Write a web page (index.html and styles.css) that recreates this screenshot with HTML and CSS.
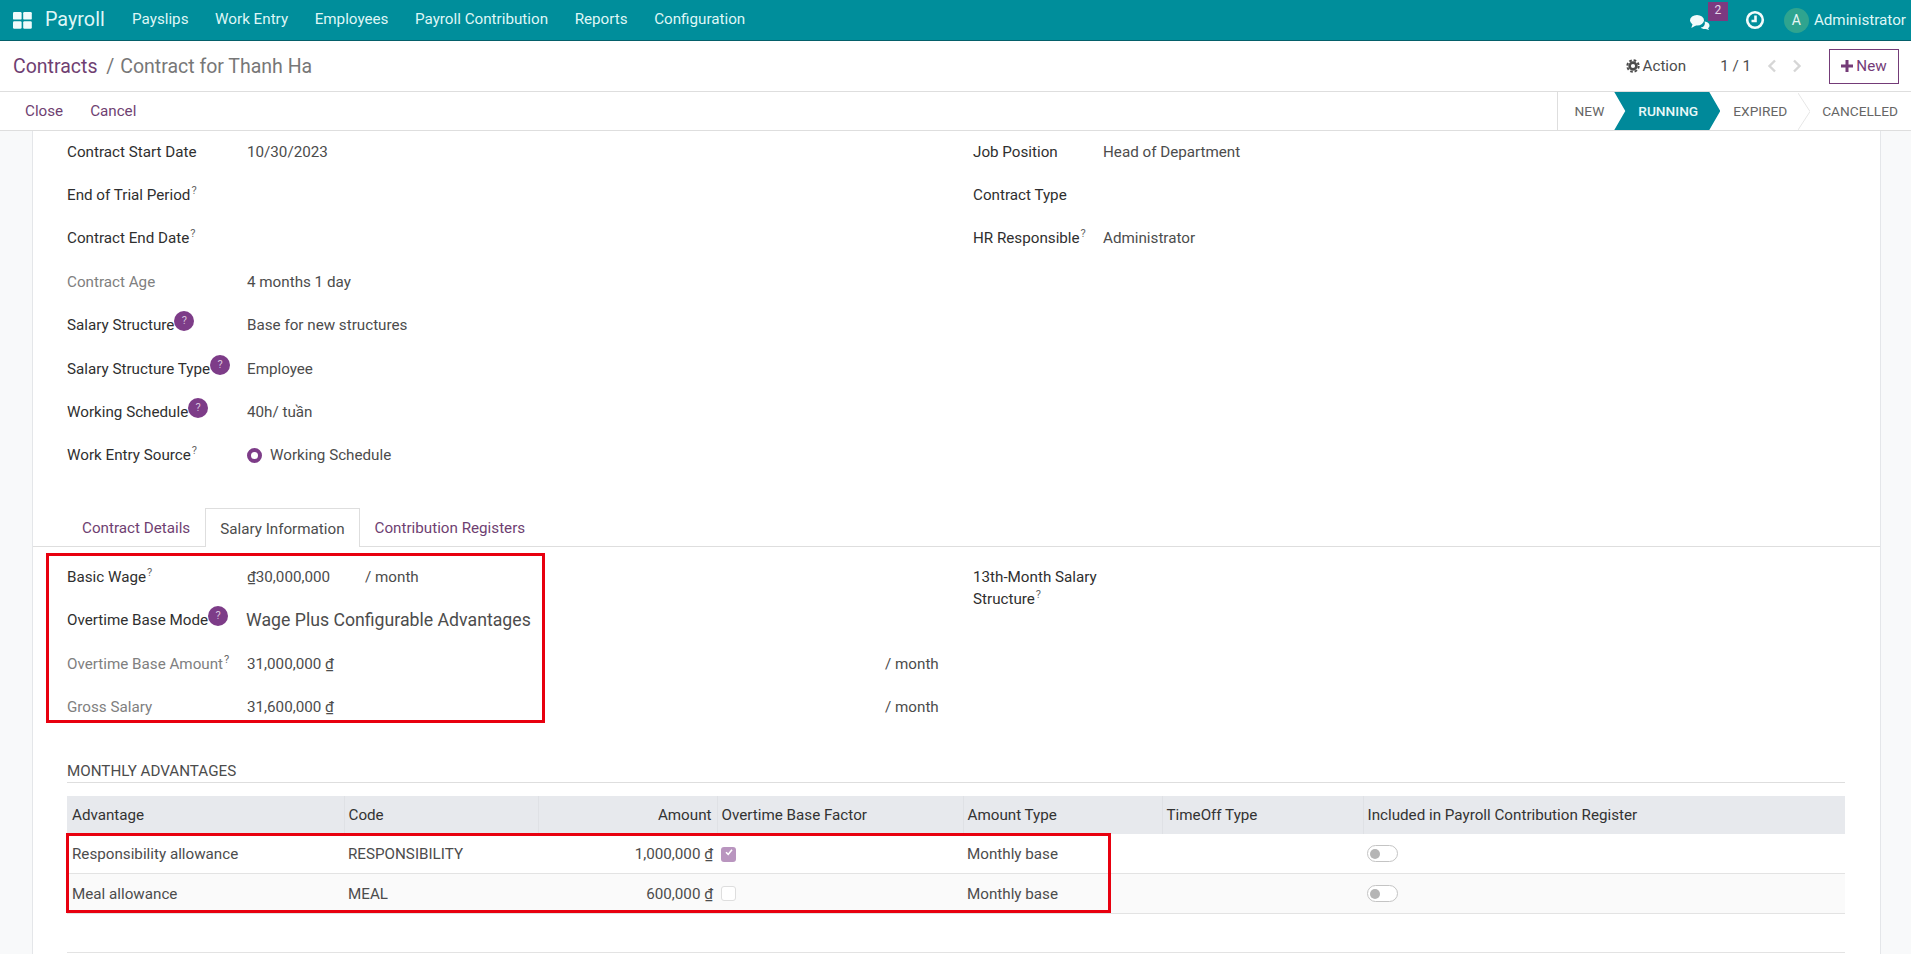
FILE: index.html
```html
<!DOCTYPE html>
<html lang="en">
  <head>
    <meta charset="UTF-8" />
    <title>Contract for Thanh Ha - Payroll</title>
    <link rel="stylesheet" href="styles.css">
  </head>
  <body>
    <nav class="navbar">
      <svg class="apps-icon" viewBox="0 0 19 17" width="19" height="17">
        <rect x="0" y="0" width="8.6" height="7.6" rx="1.2" />
        <rect x="10.2" y="0" width="8.6" height="7.6" rx="1.2" />
        <rect x="0" y="9.2" width="8.6" height="7.6" rx="1.2" />
        <rect x="10.2" y="9.2" width="8.6" height="7.6" rx="1.2" />
      </svg>
      <a class="brand">Payroll</a>
      <a class="nav-link">Payslips</a>
      <a class="nav-link">Work Entry</a>
      <a class="nav-link">Employees</a>
      <a class="nav-link">Payroll Contribution</a>
      <a class="nav-link">Reports</a>
      <a class="nav-link">Configuration</a>

      <div class="nav-right">
        <div class="chat">
          <svg viewBox="0 0 20 15" width="20" height="15">
            <path d="M14.5 6.5c.9.2 5 .8 5 4 0 1.300-.8 2.200-1.500 2.800l1.200 1.700-3.400-1.100c-2.200.3-4-.2-5-1.400 3.300-.2 4.800-3.100 3.700-6z" />
            <ellipse cx="7" cy="5.300" rx="7" ry="5.300" />
            <path d="M2.800 8.500 1.300 13l5-2.800z" />
          </svg>
          <span class="chat-badge">2</span>
        </div>
        <svg class="clock" viewBox="0 0 20 20" width="20" height="20">
          <circle cx="10" cy="10" r="7.800" />
          <path d="M10.500 5.500V11H6.500" />
        </svg>
        <span class="avatar">A</span>
        <span class="username">Administrator</span>
      </div>
    </nav>

    <div class="control-top">
      <div class="breadcrumb">
        <a>Contracts</a>
        <span class="crumb-sep">/</span>
        <span class="crumb-current">Contract for Thanh Ha</span>
      </div>
      <div class="control-actions">
        <span class="action">
          <svg viewBox="0 0 14 14" width="14" height="14">
            <circle cx="7" cy="7" r="3.400" class="gear-body" />
            <circle cx="7" cy="7" r="5.700" class="gear-teeth" />
          </svg>
          Action
        </span>
        <span class="pager">1 / 1</span>
        <svg class="pager-arrow" viewBox="0 0 10 14" width="10" height="14"><path d="M8 1.500 2.500 7 8 12.500" /></svg>
        <svg class="pager-arrow next" viewBox="0 0 10 14" width="10" height="14"><path d="M2 1.500 7.500 7 2 12.500" /></svg>
        <button class="btn-new">
          <svg viewBox="0 0 12 12" width="12" height="12"><path d="M4.500 0h3v4.500H12v3H7.500V12h-3V7.500H0v-3h4.500z" /></svg>
          New
        </button>
      </div>
    </div>

    <div class="control-bottom">
      <div class="form-buttons">
        <a>Close</a>
        <a>Cancel</a>
      </div>
      <div class="statusbar">
        <span class="status-item status-new">NEW</span>
        <span class="status-item status-running">RUNNING</span>
        <span class="status-item status-expired">EXPIRED</span>
        <svg class="status-chevron" viewBox="0 0 12 37" width="12" height="37"><path d="M0 0 12 18.500 0 37" /></svg>
        <span class="status-item status-cancelled">CANCELLED</span>
      </div>
    </div>

    <div class="content">
      <div class="sheet">
        <div class="field-columns">
          <div class="col-left">
            <div class="field"><label>Contract Start Date</label><span class="value">10/30/2023</span></div>
            <div class="field"><label>End of Trial Period<sup>?</sup></label></div>
            <div class="field"><label>Contract End Date<sup>?</sup></label></div>
            <div class="field"><label class="muted">Contract Age</label><span class="value">4 months 1 day</span></div>
            <div class="field"><label>Salary Structure<span class="help">?</span></label><span class="value">Base for new structures</span></div>
            <div class="field"><label>Salary Structure Type<span class="help">?</span></label><span class="value">Employee</span></div>
            <div class="field"><label>Working Schedule<span class="help">?</span></label><span class="value">40h/ tuần</span></div>
            <div class="field">
              <label>Work Entry Source<sup>?</sup></label>
              <span class="value radio-value"><i class="radio"></i>Working Schedule</span>
            </div>
          </div>
          <div class="col-right">
            <div class="field"><label>Job Position</label><span class="value">Head of Department</span></div>
            <div class="field"><label>Contract Type</label></div>
            <div class="field"><label>HR Responsible<sup>?</sup></label><span class="value">Administrator</span></div>
          </div>
        </div>

        <div class="tabs">
          <a class="tablink">Contract Details</a>
          <a class="tablink active">Salary Information</a>
          <a class="tablink">Contribution Registers</a>
        </div>

        <div class="field-columns salary">
          <div class="col-left">
            <div class="field"><label>Basic Wage<sup>?</sup></label><span class="value amount-short">₫30,000,000</span><span class="value">/ month</span></div>
            <div class="field"><label>Overtime Base Mode<span class="help">?</span></label><span class="value value-large">Wage Plus Configurable Advantages</span></div>
            <div class="field"><label class="muted">Overtime Base Amount<sup>?</sup></label><span class="value amount-wide">31,000,000 ₫</span><span class="value">/ month</span></div>
            <div class="field"><label class="muted">Gross Salary</label><span class="value amount-wide">31,600,000 ₫</span><span class="value">/ month</span></div>
          </div>
          <div class="col-right">
            <div class="field field-wrap"><label>13th-Month Salary Structure<sup>?</sup></label></div>
          </div>
        </div>

        <h2 class="section-title">MONTHLY ADVANTAGES</h2>

        <table class="advantages">
          <colgroup>
            <col class="c-advantage" /><col class="c-code" /><col class="c-amount" /><col class="c-factor" />
            <col class="c-type" /><col class="c-timeoff" /><col class="c-register" />
          </colgroup>
          <thead>
            <tr>
              <th>Advantage</th>
              <th>Code</th>
              <th class="num">Amount</th>
              <th>Overtime Base Factor</th>
              <th>Amount Type</th>
              <th>TimeOff Type</th>
              <th>Included in Payroll Contribution Register</th>
            </tr>
          </thead>
          <tbody>
            <tr>
              <td>Responsibility allowance</td>
              <td>RESPONSIBILITY</td>
              <td class="num">1,000,000 ₫</td>
              <td><span class="check checked"><svg viewBox="0 0 10 10" width="10" height="10"><path d="M2 5.200 4.200 7.400 8 2.800" /></svg></span></td>
              <td>Monthly base</td>
              <td></td>
              <td><span class="toggle"></span></td>
            </tr>
            <tr class="even">
              <td>Meal allowance</td>
              <td>MEAL</td>
              <td class="num">600,000 ₫</td>
              <td><span class="check"></span></td>
              <td>Monthly base</td>
              <td></td>
              <td><span class="toggle"></span></td>
            </tr>
          </tbody>
        </table>

        <div class="table-end"></div>

        <!-- red annotation boxes drawn over the form -->
        <div class="mark mark-salary"></div>
        <div class="mark mark-table"></div>
      </div>
    </div>
  </body>
</html>
```

FILE: styles.css
```css
html,
body {
  height: 100%;
}

body {
  margin: 0;
  overflow: hidden;
  font-family: Roboto, "Noto Sans", sans-serif;
  font-size: 15.2px;
  color: #4c4c4c;
  background-color: #fff;
  display: flex;
  flex-direction: column;
}

/* Top navbar */
.navbar {
  display: flex;
  align-items: center;
  height: 40px;
  flex: none;
  background-color: #008e9b;
  border-bottom: 1px solid #05606a;
  color: #dff6f6;
}

.apps-icon {
  margin-left: 13px;
  fill: #f0fbfb;
}

.brand,
.nav-link {
  position: relative;
  top: -1px;
}

.brand {
  margin-left: 13px;
  margin-right: 14px;
  font-size: 19.8px;
}

.nav-link {
  padding: 0 13.3px;
}

.nav-right {
  margin-left: auto;
  display: flex;
  align-items: center;
}

.chat {
  position: relative;
  width: 20px;
  height: 15px;
  margin-right: 35px;
  margin-top: 4px;
  fill: #f3fbfb;
}

.chat-badge {
  position: absolute;
  left: 18px;
  top: -13px;
  width: 20px;
  height: 19px;
  background-color: #7c3a80;
  color: #e6d7e8;
  font-size: 12px;
  line-height: 17px;
  text-align: center;
}

.clock {
  fill: none;
  stroke: #f3fbfb;
  stroke-width: 2.6;
  margin-right: 19px;
}

.avatar {
  width: 25px;
  height: 25px;
  border-radius: 50%;
  background-color: #2fa48f;
  color: #e8f7f4;
  text-align: center;
  line-height: 25px;
  font-size: 14px;
}

.username {
  margin-left: 5px;
  margin-right: 5px;
}

/* Control panel */
.control-top {
  flex: none;
  display: flex;
  align-items: center;
  justify-content: space-between;
  height: 50px;
  border-bottom: 1px solid #dedede;
}

.breadcrumb {
  margin-left: 13px;
  font-size: 19.5px;
  color: #777;
}

.breadcrumb a {
  color: #6f3f72;
}

.crumb-sep {
  margin: 0 1px 0 4px;
}

.control-actions {
  display: flex;
  align-items: center;
  margin-right: 12px;
}

.action {
  display: flex;
  align-items: center;
  gap: 3px;
  margin-right: 34px;
  color: #4c4c4c;
}

.gear-body {
  fill: none;
  stroke: #4c4c4c;
  stroke-width: 2.6;
}

.gear-teeth {
  fill: none;
  stroke: #4c4c4c;
  stroke-width: 2;
  stroke-dasharray: 2.6 1.87;
}

.pager {
  margin-right: 16px;
}

.pager-arrow {
  fill: none;
  stroke: #d6d6d6;
  stroke-width: 2.4;
}

.pager-arrow.next {
  margin-left: 15px;
  margin-right: 27px;
}

.btn-new {
  display: flex;
  align-items: center;
  justify-content: center;
  gap: 3px;
  width: 70px;
  height: 35px;
  padding: 0;
  background: #fff;
  border: 1px solid #743b78;
  color: #743b78;
  font-family: inherit;
  font-size: 15.2px;
  fill: #743b78;
}

.control-bottom {
  flex: none;
  display: flex;
  align-items: stretch;
  justify-content: space-between;
  height: 38px;
  border-bottom: 1px solid #dedede;
}

.form-buttons {
  display: flex;
  align-items: center;
  gap: 27px;
  margin-left: 25px;
  color: #6f3f72;
}

.statusbar {
  display: flex;
  align-items: center;
  border-left: 1px solid #dedede;
  font-size: 13.7px;
  color: #666;
}

.status-new {
  padding: 0 10px 0 17px;
}

.status-running {
  display: flex;
  align-items: center;
  width: 106px;
  height: 100%;
  box-sizing: border-box;
  padding-left: 24px;
  background-color: #00899a;
  color: #e8f8f8;
  font-weight: 500;
  clip-path: polygon(0 0, 95px 0, 100% 50%, 95px 100%, 0 100%, 11px 50%);
}

.status-expired {
  padding: 0 11px 0 13px;
}

.status-chevron {
  fill: none;
  stroke: #e6e6e6;
}

.status-cancelled {
  padding: 0 13px 0 12px;
}

/* Form sheet */
.content {
  flex: 1;
  min-height: 0;
  background-color: #f8f9fa;
  padding: 0 30px 0 32px;
  overflow: hidden;
}

.sheet {
  position: relative;
  height: 100%;
  box-sizing: border-box;
  background-color: #fff;
  border-left: 1px solid #e4e6e9;
  border-right: 1px solid #e4e6e9;
}

.field-columns {
  display: flex;
  padding-left: 34px;
}

.col-left {
  width: 906px;
  flex: none;
}

.field {
  display: flex;
  align-items: center;
  height: 43.4px;
  box-sizing: border-box;
  padding-bottom: 2px;
}

.field label {
  display: block;
  flex: none;
  width: 180px;
  color: #2f2f2f;
}

.col-right .field label {
  width: 130px;
}

label.muted,
.field label.muted {
  color: #808080;
}

sup {
  font-size: 11px;
  line-height: 0;
  color: #666;
  vertical-align: 6px;
  margin-left: 1px;
}

.help {
  display: inline-block;
  width: 20px;
  height: 20px;
  margin: -8px 0;
  border-radius: 50%;
  background-color: #7d3c88;
  color: #d9c4dd;
  font-size: 11px;
  line-height: 20px;
  text-align: center;
  vertical-align: 6px;
}

.radio-value {
  display: flex;
  align-items: center;
}

.radio {
  box-sizing: border-box;
  width: 15px;
  height: 15px;
  margin-right: 8px;
  border-radius: 50%;
  border: 4px solid #7d3c88;
  background-color: #fff;
}

/* Tabs */
.tabs {
  display: flex;
  margin-top: 30px;
  padding-left: 34px;
  height: 38px;
  border-bottom: 1px solid #dedede;
}

.tablink {
  padding: 0 15px;
  line-height: 41px;
  color: #6f3f72;
}

.tablink.active {
  height: 39px;
  box-sizing: border-box;
  padding: 0 14px;
  border: 1px solid #dedede;
  border-bottom: none;
  background-color: #fff;
  color: #4c4c4c;
}

.salary {
  margin-top: 9px;
}

.amount-short {
  width: 118px;
}

.amount-wide {
  width: 638px;
}

.value-large {
  margin-left: -1px;
  font-size: 17.7px;
}

.field-wrap {
  align-items: flex-start;
  padding-top: 10px;
}

.field-wrap label {
  line-height: 22px;
}

.section-title {
  margin: 30.5px 35px 0 34px;
  height: 22px;
  font-size: 15.2px;
  font-weight: 400;
  line-height: 22px;
  color: #4c4c4c;
  border-bottom: 1px solid #dedede;
}

/* Advantages table */
.advantages {
  width: 1778px;
  margin: 13px 0 0 34px;
  border-collapse: collapse;
  table-layout: fixed;
}

.c-advantage { width: 277px; }
.c-code { width: 194px; }
.c-amount { width: 179px; }
.c-factor { width: 246px; }
.c-type { width: 199px; }
.c-timeoff { width: 201px; }
.c-register { width: 482px; }

.advantages th {
  height: 38px;
  padding: 0 5px 0 4px;
  background-color: #e7e9ed;
  border-left: 1px solid #dfe1e5;
  font-weight: 400;
  text-align: left;
  color: #333;
}

.advantages th:first-child {
  border-left: none;
  padding-left: 5px;
}

.advantages td {
  height: 39px;
  padding: 0 5px 0 4px;
  border-bottom: 1px solid #e3e3e3;
}

.advantages td:first-child {
  padding-left: 5px;
}

.advantages td.num {
  padding-right: 4px;
}

.advantages .even td {
  background-color: #fafafa;
}

.advantages .num {
  text-align: right;
}

.check {
  display: block;
  box-sizing: border-box;
  width: 15px;
  height: 15px;
  border: 1px solid #dedede;
  border-radius: 3px;
  background-color: #fff;
}

.check.checked {
  border: none;
  background-color: #b995bf;
}

.check svg {
  display: block;
  margin: 2.5px;
  fill: none;
  stroke: #fff;
  stroke-width: 1.6;
}

.toggle {
  display: block;
  position: relative;
  box-sizing: border-box;
  width: 31px;
  height: 17px;
  border: 1px solid #c4c4c4;
  border-radius: 9px;
  background-color: #fff;
}

.toggle::before {
  content: "";
  position: absolute;
  left: 2px;
  top: 2.5px;
  width: 10px;
  height: 10px;
  border-radius: 50%;
  background-color: #b5b5b5;
}

.table-end {
  margin: 38px 35px 0 34px;
  border-top: 1px solid #e3e3e3;
}

/* Red annotation boxes */
.mark {
  position: absolute;
  box-sizing: border-box;
  border: 3px solid #e8000f;
  pointer-events: none;
}

.mark-salary {
  left: 13px;
  top: 422px;
  width: 499px;
  height: 170px;
}

.mark-table {
  left: 33px;
  top: 702px;
  width: 1045px;
  height: 80px;
}
```
